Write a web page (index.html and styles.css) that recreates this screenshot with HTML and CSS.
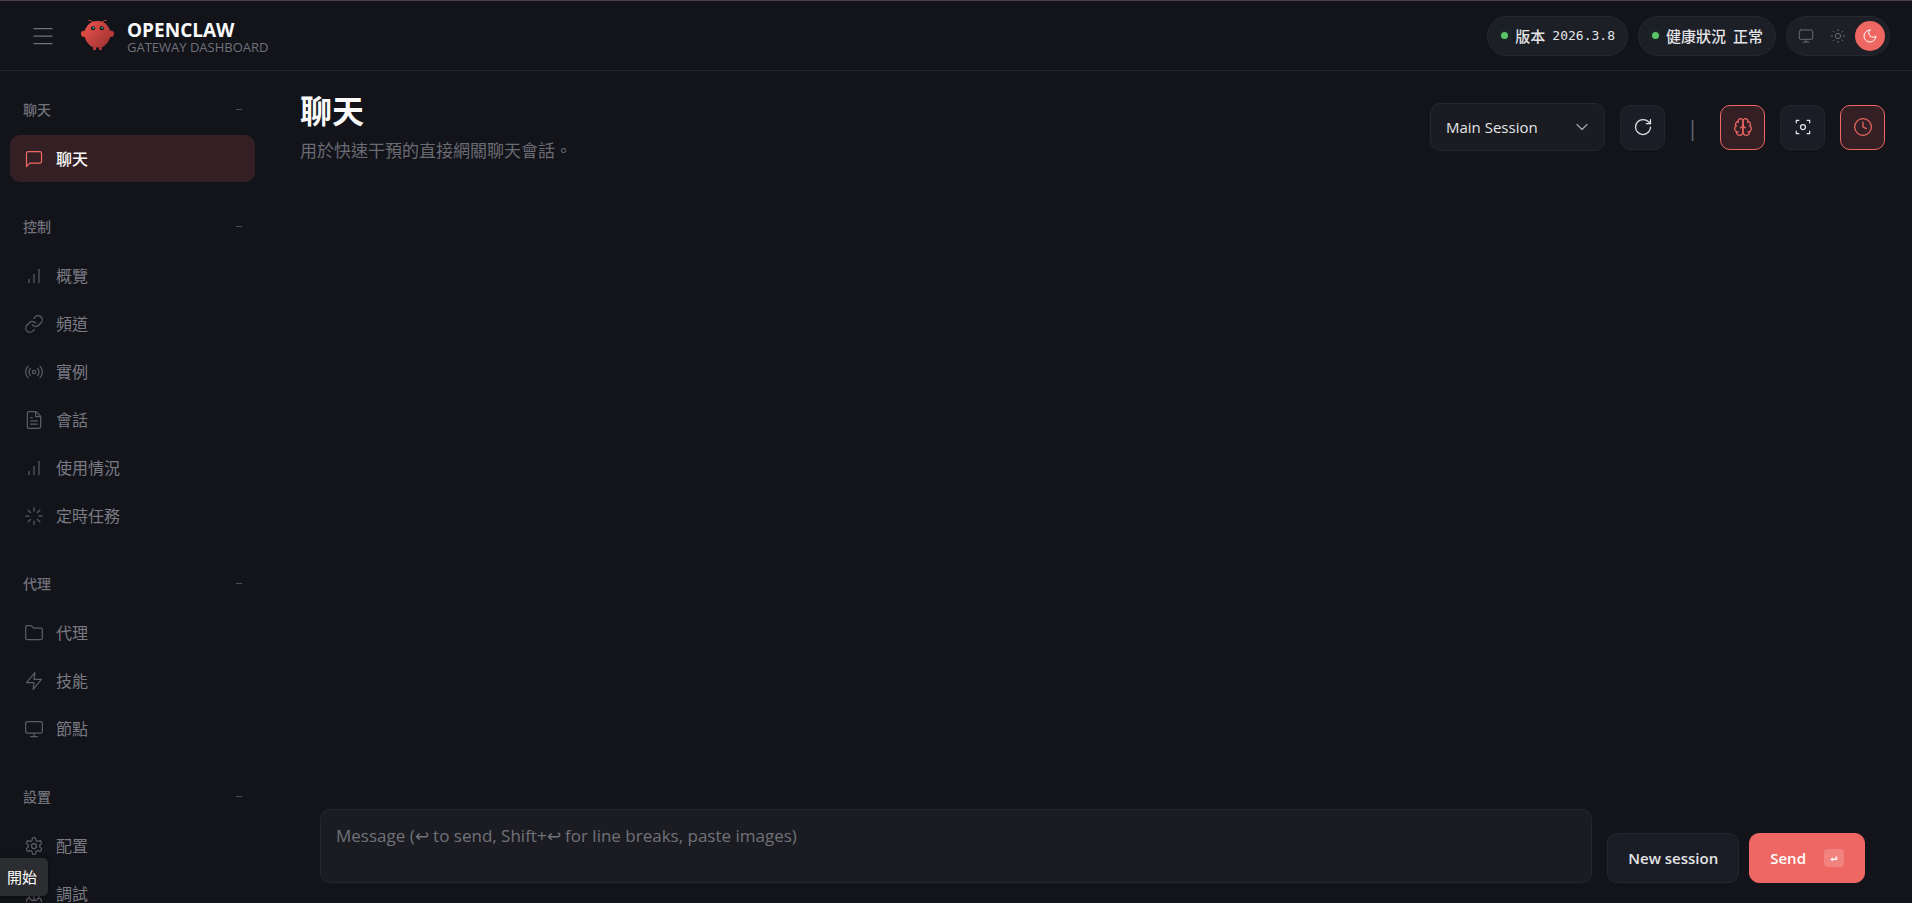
FILE: index.html
```
<!DOCTYPE html>
<html lang="zh-TW">
<head>
    <meta charset="UTF-8">
    <meta name="viewport" content="width=device-width, initial-scale=1.0">
    <title>OpenClaw</title>
    <link rel="stylesheet" href="styles.css">
</head>
<body>
    <header class="topbar">
        <button class="menu-toggle" aria-label="選單">
            <svg class="icon" viewBox="0 0 24 24"><path d="M1 3h22M1 12h22M1 21h22"/></svg>
        </button>
        <svg class="logo" viewBox="0 0 120 120">
            <defs>
                <linearGradient id="shell" x1="0" y1="0" x2="1" y2="1">
                    <stop offset="0" stop-color="#ee544e"/>
                    <stop offset="1" stop-color="#962e2e"/>
                </linearGradient>
            </defs>
            <path d="M60 10C30 10 15 35 15 55s15 40 30 45v10h10v-10s5 2 10 0v10h10v-10c15-5 30-25 30-45S90 10 60 10z" fill="url(#shell)"/>
            <path d="M20 45C5 40 0 50 5 60s15 5 20-5 0-10-5-10z" fill="#d9483f"/>
            <path d="M100 45c15-5 20 5 15 15s-15 5-20-5 0-10 5-10z" fill="#b93a37"/>
            <path d="M45 15Q35 5 30 8M75 15Q85 5 90 8" fill="none" stroke="#e0504a" stroke-width="3" stroke-linecap="round"/>
            <circle cx="45" cy="35" r="7" fill="#0a1012"/>
            <circle cx="75" cy="35" r="7" fill="#0a1012"/>
            <circle cx="46" cy="34" r="3" fill="#2fc4b6"/>
            <circle cx="76" cy="34" r="3" fill="#2fc4b6"/>
        </svg>
        <div class="brand">
            <div class="brand-title">OPENCLAW</div>
            <div class="brand-sub">GATEWAY DASHBOARD</div>
        </div>
        <div class="status">
            <div class="pill"><span class="dot"></span><span>版本</span><span class="mono">2026.3.8</span></div>
            <div class="pill"><span class="dot"></span><span>健康狀況</span><span>正常</span></div>
            <div class="theme">
                <button aria-label="系統"><svg class="icon" viewBox="0 0 24 24"><rect x="2" y="3" width="20" height="14" rx="2"/><path d="M8 21h8M12 17v4"/></svg></button>
                <button aria-label="淺色"><svg class="icon" viewBox="0 0 24 24"><circle cx="12" cy="12" r="4"/><path d="M12 2v2M12 20v2M5 5l1 1M18 18l1 1M2 12h2M20 12h2M6 18l-1 1M19 5l-1 1"/></svg></button>
                <button class="active" aria-label="深色"><svg class="icon" viewBox="0 0 24 24"><path d="M12 3a6 6 0 0 0 9 9 9 9 0 1 1-9-9z"/></svg></button>
            </div>
        </div>
    </header>

    <div class="shell">
        <nav class="sidebar">
            <section class="group">
                <button class="group-head"><span>聊天</span><span class="minus"></span></button>
                <a class="item active" href="#chat"><svg class="icon" viewBox="0 0 24 24"><path d="M21 15a2 2 0 0 1-2 2H7l-4 4V5a2 2 0 0 1 2-2h14a2 2 0 0 1 2 2z"/></svg>聊天</a>
            </section>
            <section class="group">
                <button class="group-head"><span>控制</span><span class="minus"></span></button>
                <a class="item" href="#overview"><svg class="icon" viewBox="0 0 24 24"><path d="M12 20V10M18 20V4M6 20v-4"/></svg>概覽</a>
                <a class="item" href="#channels"><svg class="icon" viewBox="0 0 24 24"><path d="M10 13a5 5 0 0 0 7.54.54l3-3a5 5 0 0 0-7.07-7.07l-1.72 1.71"/><path d="M14 11a5 5 0 0 0-7.54-.54l-3 3a5 5 0 0 0 7.07 7.07l1.71-1.71"/></svg>頻道</a>
                <a class="item" href="#instances"><svg class="icon" viewBox="0 0 24 24"><circle cx="12" cy="12" r="2"/><path d="M16.24 7.76a6 6 0 0 1 0 8.49M7.76 16.24a6 6 0 0 1 0-8.49M19.07 4.93a10 10 0 0 1 0 14.14M4.93 19.07a10 10 0 0 1 0-14.14"/></svg>實例</a>
                <a class="item" href="#sessions"><svg class="icon" viewBox="0 0 24 24"><path d="M14.5 2H6a2 2 0 0 0-2 2v16a2 2 0 0 0 2 2h12a2 2 0 0 0 2-2V7.5z"/><path d="M14 2v6h6M16 13H8M16 17H8M10 9H8"/></svg>會話</a>
                <a class="item" href="#usage"><svg class="icon" viewBox="0 0 24 24"><path d="M12 20V10M18 20V4M6 20v-4"/></svg>使用情況</a>
                <a class="item" href="#cron"><svg class="icon" viewBox="0 0 24 24"><path d="M12 2v4M16.2 7.8l2.9-2.9M18 12h4M16.2 16.2l2.9 2.9M12 18v4M4.9 19.1l2.9-2.9M2 12h4M4.9 4.9l2.9 2.9"/></svg>定時任務</a>
            </section>
            <section class="group">
                <button class="group-head"><span>代理</span><span class="minus"></span></button>
                <a class="item" href="#agents"><svg class="icon" viewBox="0 0 24 24"><path d="M20 20a2 2 0 0 0 2-2V8a2 2 0 0 0-2-2h-7.9a2 2 0 0 1-1.69-.9L9.6 3.9A2 2 0 0 0 7.93 3H4a2 2 0 0 0-2 2v13a2 2 0 0 0 2 2z"/></svg>代理</a>
                <a class="item" href="#skills"><svg class="icon" viewBox="0 0 24 24"><path d="M13 2 3 14h9l-1 8 10-12h-9z"/></svg>技能</a>
                <a class="item" href="#nodes"><svg class="icon" viewBox="0 0 24 24"><rect x="2" y="3" width="20" height="14" rx="2"/><path d="M8 21h8M12 17v4"/></svg>節點</a>
            </section>
            <section class="group">
                <button class="group-head"><span>設置</span><span class="minus"></span></button>
                <a class="item" href="#config"><svg class="icon" viewBox="0 0 24 24"><path d="M12.22 2h-.44a2 2 0 0 0-2 2v.18a2 2 0 0 1-1 1.73l-.43.25a2 2 0 0 1-2 0l-.15-.08a2 2 0 0 0-2.73.73l-.22.38a2 2 0 0 0 .73 2.73l.15.1a2 2 0 0 1 1 1.72v.51a2 2 0 0 1-1 1.74l-.15.09a2 2 0 0 0-.73 2.73l.22.38a2 2 0 0 0 2.73.73l.15-.08a2 2 0 0 1 2 0l.43.25a2 2 0 0 1 1 1.73V20a2 2 0 0 0 2 2h.44a2 2 0 0 0 2-2v-.18a2 2 0 0 1 1-1.73l.43-.25a2 2 0 0 1 2 0l.15.08a2 2 0 0 0 2.73-.73l.22-.39a2 2 0 0 0-.73-2.73l-.15-.08a2 2 0 0 1-1-1.74v-.5a2 2 0 0 1 1-1.74l.15-.09a2 2 0 0 0 .73-2.73l-.22-.38a2 2 0 0 0-2.73-.73l-.15.08a2 2 0 0 1-2 0l-.43-.25a2 2 0 0 1-1-1.73V4a2 2 0 0 0-2-2z"/><circle cx="12" cy="12" r="3"/></svg>配置</a>
                <a class="item" href="#debug"><svg class="icon" viewBox="0 0 24 24"><path d="m8 2 1.88 1.88M14.12 3.88 16 2M9 7.13v-1a3 3 0 1 1 6 0v1M12 20c-3.3 0-6-2.7-6-6v-3a4 4 0 0 1 4-4h4a4 4 0 0 1 4 4v3c0 3.3-2.7 6-6 6M12 20v-9M6.53 9C4.6 8.8 3 7.1 3 5M6 13H2M3 21c0-2.1 1.7-3.9 3.8-4M21 5c0 2.1-1.6 3.8-3.5 4M22 13h-4M17.2 17c2.1.1 3.8 1.9 3.8 4"/></svg>調試</a>
            </section>
        </nav>

        <main class="content">
            <div class="content-head">
                <div>
                    <h1>聊天</h1>
                    <p class="sub">用於快速干預的直接網關聊天會話。</p>
                </div>
                <div class="controls">
                    <div class="select-wrap">
                        <select aria-label="會話"><option>Main Session</option></select>
                        <svg class="icon chevron" viewBox="0 0 24 24"><path d="m6 9 6 6 6-6"/></svg>
                    </div>
                    <button class="tool" aria-label="重新整理"><svg class="icon" viewBox="0 0 24 24"><path d="M21 12a9 9 0 1 1-9-9c2.52 0 4.93 1 6.74 2.74L21 8"/><path d="M21 3v5h-5"/></svg></button>
                    <span class="divider">|</span>
                    <button class="tool active" aria-label="思考"><svg class="icon" viewBox="0 0 24 24"><path d="M12 5a3 3 0 1 0-5.997.125 4 4 0 0 0-2.526 5.77 4 4 0 0 0 .556 6.588A4 4 0 1 0 12 18Z"/><path d="M12 5a3 3 0 1 1 5.997.125 4 4 0 0 1 2.526 5.77 4 4 0 0 1-.556 6.588A4 4 0 1 1 12 18Z"/><path d="M15 13a4.5 4.5 0 0 1-3-4 4.5 4.5 0 0 1-3 4M17.6 6.5a3 3 0 0 0 .4-1.375M6 5.125A3 3 0 0 0 6.4 6.5M3.5 10.9a4 4 0 0 1 .6-.4M19.9 10.5a4 4 0 0 1 .6.4M6 18a4 4 0 0 1-2-.5M20 17.5a4 4 0 0 1-2 .5"/></svg></button>
                    <button class="tool" aria-label="專注模式"><svg class="icon" viewBox="0 0 24 24"><path d="M4 7V4h3M17 4h3v3M20 17v3h-3M7 20H4v-3"/><circle cx="12" cy="12" r="3"/></svg></button>
                    <button class="tool active" aria-label="定時"><svg class="icon" viewBox="0 0 24 24"><circle cx="12" cy="12" r="10"/><path d="M12 6v6l4 2"/></svg></button>
                </div>
            </div>

            <form class="compose">
                <textarea aria-label="Message" placeholder="Message (↩ to send, Shift+↩ for line breaks, paste images)"></textarea>
                <div class="actions">
                    <button type="button" class="btn">New session</button>
                    <button type="button" class="btn primary">Send <kbd>↵</kbd></button>
                </div>
            </form>
        </main>
    </div>

    <div class="tooltip">開始</div>
</body>
</html>
```
FILE: styles.css
```
* {
    box-sizing: border-box;
}
body {
    margin: 0;
    height: 100vh;
    display: flex;
    flex-direction: column;
    overflow: hidden;
    background-color: #12141a;
    color: #e4e4e7;
    font-family: "Open Sans", "Noto Sans CJK TC", sans-serif;
    font-size: 16px;
}
button, select, textarea {
    font-family: inherit;
    color: inherit;
}
button {
    cursor: pointer;
    padding: 0;
    border: none;
    background: none;
}
.icon {
    width: 20px;
    height: 20px;
    flex-shrink: 0;
    fill: none;
    stroke: currentColor;
    stroke-width: 1.5;
    stroke-linecap: round;
    stroke-linejoin: round;
}

/* top bar */
.topbar {
    height: 71px;
    flex-shrink: 0;
    display: flex;
    align-items: center;
    padding: 0 22px 0 20px;
    border-top: 1px solid #4a4044;
    border-bottom: 1px solid #24262c;
}
.menu-toggle {
    width: 45px;
    height: 45px;
    display: flex;
    align-items: center;
    justify-content: center;
    color: #71717a;
}
.logo {
    width: 35px;
    height: 35px;
    margin: 0 12px 0 15px;
}
.brand {
    padding-top: 4px;
}
.brand-title {
    font-size: 19px;
    font-weight: 700;
    line-height: 20px;
    color: #fafafa;
}
.brand-sub {
    font-size: 13px;
    font-weight: 500;
    line-height: 15px;
    color: #71717a;
}
.status {
    margin-left: auto;
    display: flex;
    align-items: center;
    gap: 10px;
}
.pill, .theme {
    height: 40px;
    display: flex;
    align-items: center;
    border: 1px solid #26282e;
    border-radius: 20px;
    background-color: #1c1f26;
}
.pill {
    gap: 7px;
    padding: 0 12px 0 13px;
    font-size: 15px;
    line-height: 20px;
    font-weight: 500;
}
.dot {
    width: 7px;
    height: 7px;
    border-radius: 50%;
    background-color: #5ac468;
    box-shadow: 0 0 8px rgba(34, 197, 94, 0.2);
}
.mono {
    font-family: "DejaVu Sans Mono", monospace;
    font-size: 13px;
}
.theme {
    padding: 0 4px;
    gap: 2px;
}
.theme button {
    width: 30px;
    height: 30px;
    border-radius: 50%;
    display: flex;
    align-items: center;
    justify-content: center;
    color: #6a6a73;
}
.theme .icon {
    width: 16px;
    height: 16px;
}
.theme .active {
    background-color: #ee6762;
    color: #fff;
}

/* side navigation */
.shell {
    flex: 1;
    min-height: 0;
    display: flex;
}
.sidebar {
    width: 265px;
    flex-shrink: 0;
    padding: 18px 10px 0;
    overflow: hidden;
}
.group {
    display: flex;
    flex-direction: column;
    gap: 1px;
    margin-bottom: 24px;
}
.group-head {
    height: 40px;
    margin-bottom: 5px;
    padding: 0 13px;
    display: flex;
    align-items: center;
    justify-content: space-between;
    font-size: 14px;
    font-weight: 500;
    color: #71717a;
}
.minus {
    width: 6px;
    height: 1px;
    background-color: #4c4c54;
}
.item {
    height: 47px;
    padding: 0 14px;
    display: flex;
    align-items: center;
    gap: 12px;
    border-radius: 10px;
    line-height: 24px;
    color: #7a7a83;
    text-decoration: none;
}
.item .icon {
    color: #5c5c64;
}
.item.active {
    background-color: #342024;
    font-weight: 500;
    color: #fafafa;
}
.item.active .icon {
    color: #ee6762;
}

/* chat */
.content {
    flex: 1;
    min-width: 0;
    display: flex;
    flex-direction: column;
    justify-content: space-between;
    padding: 20px 27px 20px 35px;
}
.content-head {
    display: flex;
    justify-content: space-between;
}
h1 {
    margin: 0;
    font-size: 32px;
    line-height: 40px;
    font-weight: 700;
    color: #fafafa;
}
.sub {
    margin: 8px 0 0;
    font-size: 17px;
    line-height: 24px;
    color: #6a6a73;
}
.controls {
    height: 72px;
    display: flex;
    align-items: center;
    gap: 15px;
}
.select-wrap {
    position: relative;
}
select {
    width: 175px;
    height: 48px;
    padding: 0 40px 0 15px;
    appearance: none;
    border: 1px solid #26272b;
    border-radius: 10px;
    background-color: #1b1c21;
    font-size: 15px;
}
.chevron {
    position: absolute;
    right: 13px;
    top: 14px;
    color: #a1a1aa;
    pointer-events: none;
}
.tool {
    width: 45px;
    height: 45px;
    display: flex;
    align-items: center;
    justify-content: center;
    border: 1px solid #24262c;
    border-radius: 10px;
    background-color: #1a1d25;
}
.tool.active {
    border-color: #ee6762;
    background-color: #342024;
    color: #ee6762;
}
.divider {
    width: 25px;
    text-align: center;
    font-size: 22px;
    color: #5d6672;
}
.compose {
    display: flex;
    align-items: flex-end;
    gap: 15px;
    padding: 0 20px;
}
textarea {
    flex: 1;
    min-width: 0;
    height: 74px;
    padding: 13px 15px;
    resize: none;
    border: 1px solid #26272b;
    border-radius: 10px;
    background-color: #1b1c21;
    font-size: 17px;
    line-height: 26px;
}
textarea::placeholder {
    color: #71717a;
}
.actions {
    display: flex;
    gap: 10px;
}
.btn {
    height: 50px;
    padding: 0 20px;
    display: flex;
    align-items: center;
    border: 1px solid #26282e;
    border-radius: 10px;
    background-color: #1a1d25;
    font-size: 15px;
    font-weight: 600;
}
.btn.primary {
    gap: 18px;
    border-color: #ee6762;
    background-color: #ee6762;
    color: #fff;
}
kbd {
    width: 20px;
    height: 18px;
    border-radius: 4px;
    background-color: #f1827e;
    font-family: "DejaVu Sans Mono", monospace;
    font-size: 11px;
    line-height: 18px;
}

.tooltip {
    position: absolute;
    left: 0;
    bottom: 7px;
    padding: 7px 11px 7px 7px;
    border-radius: 0 5px 5px 0;
    background-color: #2c2d31;
    box-shadow: 0 1px 4px rgba(0, 0, 0, 0.5);
    font-size: 15px;
    line-height: 24px;
    color: #fff;
}
```
